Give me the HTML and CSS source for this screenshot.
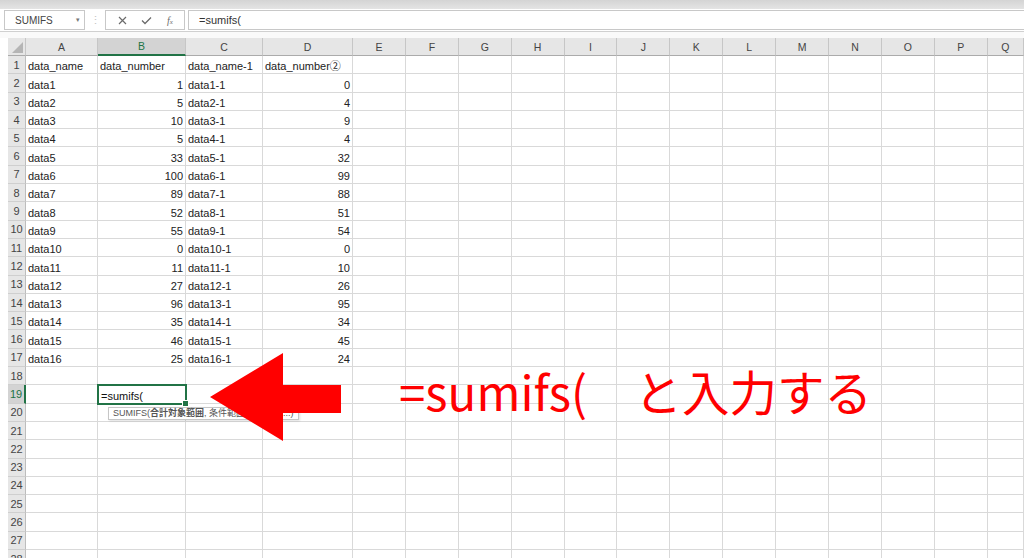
FILE: index.html
```html
<!DOCTYPE html>
<html lang="ja">
<head>
<meta charset="utf-8">
<title>SUMIFS</title>
<link rel="stylesheet" href="styles.css">
</head>
<body>
<div class="app">
  <div class="topband"></div>
  <div class="fbar">
    <div class="namebox"><span>SUMIFS</span><span class="caret">&#9662;</span></div>
    <div class="dots">&#8942;</div>
    <div class="fbtns">
      <span class="fbtn"><svg width="9" height="9" viewBox="0 0 9 9"><path d="M1 1 L8 8 M8 1 L1 8" stroke="#6b6b6b" stroke-width="1.2" fill="none"/></svg></span>
      <span class="fbtn"><svg width="11" height="9" viewBox="0 0 11 9"><path d="M1 4.5 L4 7.5 L10 1.5" stroke="#6b6b6b" stroke-width="1.3" fill="none"/></svg></span>
      <span class="fbtn fx">f<span class="fxx">x</span></span>
    </div>
    <div class="finput">=sumifs(</div>
  </div>
  <div class="gap"></div>
  <div class="sheet">
    <div class="corner"></div><div class="ch">A</div><div class="ch sel">B</div><div class="ch">C</div><div class="ch">D</div><div class="ch">E</div><div class="ch">F</div><div class="ch">G</div><div class="ch">H</div><div class="ch">I</div><div class="ch">J</div><div class="ch">K</div><div class="ch">L</div><div class="ch">M</div><div class="ch">N</div><div class="ch">O</div><div class="ch">P</div><div class="ch">Q</div>

    <div class="rh">1</div><div>data_name</div><div>data_number</div><div>data_name-1</div><div>data_number②</div><div></div><div></div><div></div><div></div><div></div><div></div><div></div><div></div><div></div><div></div><div></div><div></div><div></div>
    <div class="rh">2</div><div>data1</div><div class="n">1</div><div>data1-1</div><div class="n">0</div><div></div><div></div><div></div><div></div><div></div><div></div><div></div><div></div><div></div><div></div><div></div><div></div><div></div>
    <div class="rh">3</div><div>data2</div><div class="n">5</div><div>data2-1</div><div class="n">4</div><div></div><div></div><div></div><div></div><div></div><div></div><div></div><div></div><div></div><div></div><div></div><div></div><div></div>
    <div class="rh">4</div><div>data3</div><div class="n">10</div><div>data3-1</div><div class="n">9</div><div></div><div></div><div></div><div></div><div></div><div></div><div></div><div></div><div></div><div></div><div></div><div></div><div></div>
    <div class="rh">5</div><div>data4</div><div class="n">5</div><div>data4-1</div><div class="n">4</div><div></div><div></div><div></div><div></div><div></div><div></div><div></div><div></div><div></div><div></div><div></div><div></div><div></div>
    <div class="rh">6</div><div>data5</div><div class="n">33</div><div>data5-1</div><div class="n">32</div><div></div><div></div><div></div><div></div><div></div><div></div><div></div><div></div><div></div><div></div><div></div><div></div><div></div>
    <div class="rh">7</div><div>data6</div><div class="n">100</div><div>data6-1</div><div class="n">99</div><div></div><div></div><div></div><div></div><div></div><div></div><div></div><div></div><div></div><div></div><div></div><div></div><div></div>
    <div class="rh">8</div><div>data7</div><div class="n">89</div><div>data7-1</div><div class="n">88</div><div></div><div></div><div></div><div></div><div></div><div></div><div></div><div></div><div></div><div></div><div></div><div></div><div></div>
    <div class="rh">9</div><div>data8</div><div class="n">52</div><div>data8-1</div><div class="n">51</div><div></div><div></div><div></div><div></div><div></div><div></div><div></div><div></div><div></div><div></div><div></div><div></div><div></div>
    <div class="rh">10</div><div>data9</div><div class="n">55</div><div>data9-1</div><div class="n">54</div><div></div><div></div><div></div><div></div><div></div><div></div><div></div><div></div><div></div><div></div><div></div><div></div><div></div>
    <div class="rh">11</div><div>data10</div><div class="n">0</div><div>data10-1</div><div class="n">0</div><div></div><div></div><div></div><div></div><div></div><div></div><div></div><div></div><div></div><div></div><div></div><div></div><div></div>
    <div class="rh">12</div><div>data11</div><div class="n">11</div><div>data11-1</div><div class="n">10</div><div></div><div></div><div></div><div></div><div></div><div></div><div></div><div></div><div></div><div></div><div></div><div></div><div></div>
    <div class="rh">13</div><div>data12</div><div class="n">27</div><div>data12-1</div><div class="n">26</div><div></div><div></div><div></div><div></div><div></div><div></div><div></div><div></div><div></div><div></div><div></div><div></div><div></div>
    <div class="rh">14</div><div>data13</div><div class="n">96</div><div>data13-1</div><div class="n">95</div><div></div><div></div><div></div><div></div><div></div><div></div><div></div><div></div><div></div><div></div><div></div><div></div><div></div>
    <div class="rh">15</div><div>data14</div><div class="n">35</div><div>data14-1</div><div class="n">34</div><div></div><div></div><div></div><div></div><div></div><div></div><div></div><div></div><div></div><div></div><div></div><div></div><div></div>
    <div class="rh">16</div><div>data15</div><div class="n">46</div><div>data15-1</div><div class="n">45</div><div></div><div></div><div></div><div></div><div></div><div></div><div></div><div></div><div></div><div></div><div></div><div></div><div></div>
    <div class="rh">17</div><div>data16</div><div class="n">25</div><div>data16-1</div><div class="n">24</div><div></div><div></div><div></div><div></div><div></div><div></div><div></div><div></div><div></div><div></div><div></div><div></div><div></div>
    <div class="rh">18</div><div></div><div></div><div></div><div></div><div></div><div></div><div></div><div></div><div></div><div></div><div></div><div></div><div></div><div></div><div></div><div></div><div></div>
    <div class="rh sel">19</div><div></div><div class="active">=sumifs(<span class="tip">SUMIFS(<b>合計対象範囲</b>, 条件範囲1, 条件1, ...)</span></div><div></div><div></div><div></div><div></div><div></div><div></div><div></div><div></div><div></div><div></div><div></div><div></div><div></div><div></div><div></div>
    <div class="rh">20</div><div></div><div></div><div></div><div></div><div></div><div></div><div></div><div></div><div></div><div></div><div></div><div></div><div></div><div></div><div></div><div></div><div></div>
    <div class="rh">21</div><div></div><div></div><div></div><div></div><div></div><div></div><div></div><div></div><div></div><div></div><div></div><div></div><div></div><div></div><div></div><div></div><div></div>
    <div class="rh">22</div><div></div><div></div><div></div><div></div><div></div><div></div><div></div><div></div><div></div><div></div><div></div><div></div><div></div><div></div><div></div><div></div><div></div>
    <div class="rh">23</div><div></div><div></div><div></div><div></div><div></div><div></div><div></div><div></div><div></div><div></div><div></div><div></div><div></div><div></div><div></div><div></div><div></div>
    <div class="rh">24</div><div></div><div></div><div></div><div></div><div></div><div></div><div></div><div></div><div></div><div></div><div></div><div></div><div></div><div></div><div></div><div></div><div></div>
    <div class="rh">25</div><div></div><div></div><div></div><div></div><div></div><div></div><div></div><div></div><div></div><div></div><div></div><div></div><div></div><div></div><div></div><div></div><div></div>
    <div class="rh">26</div><div></div><div></div><div></div><div></div><div></div><div></div><div></div><div></div><div></div><div></div><div></div><div></div><div></div><div></div><div></div><div></div><div></div>
    <div class="rh">27</div><div></div><div></div><div></div><div></div><div></div><div></div><div></div><div></div><div></div><div></div><div></div><div></div><div></div><div></div><div></div><div></div><div></div>
    <div class="rh">28</div><div></div><div></div><div></div><div></div><div></div><div></div><div></div><div></div><div></div><div></div><div></div><div></div><div></div><div></div><div></div><div></div><div></div>

    <svg class="arrow" width="131" height="88" viewBox="0 0 131 88"><polygon points="0,44 73,0 73,32 131,32 131,60 73,60 73,88" fill="#ff0000"/></svg>
    <p class="note">=sumifs(　と入力する</p>
  </div>
</div>
</body>
</html>
```

FILE: styles.css
```css
html, body {
  margin: 0;
  padding: 0;
}
body {
  background: #fff;
  font-family: "Liberation Sans", "Noto Sans CJK JP", sans-serif;
  width: 1024px;
  height: 558px;
  overflow: hidden;
}
.app {
  width: 1024px;
  height: 558px;
  overflow: hidden;
}
.topband {
  height: 9px;
  background: linear-gradient(#d4d4d4, #e4e4e4);
}
.fbar {
  height: 21px;
  display: flex;
  align-items: stretch;
  padding: 1px 0 0 4px;
  background: #fff;
  border-bottom: 1px solid #d0d0d0;
  box-sizing: content-box;
}
.namebox {
  width: 81px;
  box-sizing: border-box;
  border: 1px solid #c8c8c8;
  display: flex;
  align-items: center;
  justify-content: space-between;
  padding: 0 4px 0 10px;
  font-size: 10px;
  color: #444;
  margin-bottom: 1px;
}
.caret {
  font-size: 7px;
  color: #777;
}
.dots {
  width: 20px;
  display: flex;
  align-items: center;
  justify-content: center;
  color: #c4c4c4;
  font-size: 11px;
}
.fbtns {
  width: 80px;
  box-sizing: border-box;
  border: 1px solid #c8c8c8;
  display: grid;
  grid-template-columns: repeat(3, 1fr);
  padding: 0 2px 0 4px;
  margin-bottom: 1px;
}
.fbtn {
  display: flex;
  align-items: center;
  justify-content: center;
}
.fx {
  font-family: "Liberation Serif", serif;
  font-style: italic;
  font-size: 10px;
  color: #6b6b6b;
}
.fxx {
  font-size: 7px;
  margin-top: 3px;
}
.finput {
  flex: 1;
  margin-left: 3px;
  border: 1px solid #c8c8c8;
  border-right: none;
  margin-bottom: 1px;
  padding-left: 10px;
  font-size: 11px;
  color: #333;
  display: flex;
  align-items: center;
}
.gap {
  height: 6px;
  background: #fafafa;
}
.sheet {
  position: relative;
  margin-left: 8px;
  display: grid;
  grid-template-columns: 18px 72px 88px 77px 90px repeat(12, 52.9px) 1fr;
  grid-template-rows: 18px;
  grid-auto-rows: 18.3px;
}
.sheet > div {
  box-sizing: border-box;
  border-right: 1px solid #d9d9d9;
  border-bottom: 1px solid #d9d9d9;
  font-size: 11px;
  color: #222;
  padding: 0 2px;
  white-space: nowrap;
  display: flex;
  align-items: flex-end;
  line-height: 14px;
}
.sheet > .n {
  justify-content: flex-end;
}
.sheet > .ch {
  background: #e6e6e6;
  border-right: 1px solid #c6c6c6;
  border-bottom: 1px solid #ababab;
  justify-content: center;
  align-items: center;
  color: #444;
  font-size: 10.5px;
}
.sheet > .ch.sel {
  background: #d3d3d3;
  color: #217346;
  border-bottom: 2px solid #217346;
}
.sheet > .corner {
  position: relative;
  background: #e6e6e6;
  border-right: 1px solid #c6c6c6;
  border-bottom: 1px solid #ababab;
}
.corner::after {
  content: "";
  position: absolute;
  right: 2px;
  bottom: 2px;
  width: 0;
  height: 0;
  border-left: 11px solid transparent;
  border-bottom: 11px solid #b5b5b5;
}
.sheet > .rh {
  background: #e6e6e6;
  border-right: 1px solid #bdbdbd;
  border-bottom: 1px solid #cfcfcf;
  justify-content: center;
  align-items: center;
  color: #444;
  padding: 0;
  font-size: 11px;
}
.sheet > .rh.sel {
  background: #d3d3d3;
  color: #217346;
  border-right: 2px solid #217346;
}
.sheet > .active {
  position: relative;
  z-index: 2;
  outline: 2px solid #217346;
  outline-offset: -1px;
  padding-left: 3px;
  color: #111;
}
.active::after {
  content: "";
  position: absolute;
  right: -4px;
  bottom: -4px;
  width: 5px;
  height: 5px;
  background: #217346;
  border: 1px solid #fff;
}
.tip {
  position: absolute;
  left: 10px;
  top: 22px;
  background: #fff;
  border: 1px solid #c6c6c6;
  box-shadow: 1px 1px 2px rgba(0, 0, 0, 0.12);
  font-size: 9px;
  line-height: 11px;
  padding: 0 4px;
  color: #555;
  white-space: nowrap;
}
.tip b {
  font-weight: 600;
  color: #555;
}
.arrow {
  position: absolute;
  left: 202px;
  top: 315px;
  z-index: 5;
}
.note {
  position: absolute;
  left: 391px;
  top: 329px;
  margin: 0;
  z-index: 5;
  font-family: "Noto Sans CJK JP", sans-serif;
  font-size: 47.5px;
  line-height: 48px;
  color: #ff0000;
  white-space: nowrap;
}
```
